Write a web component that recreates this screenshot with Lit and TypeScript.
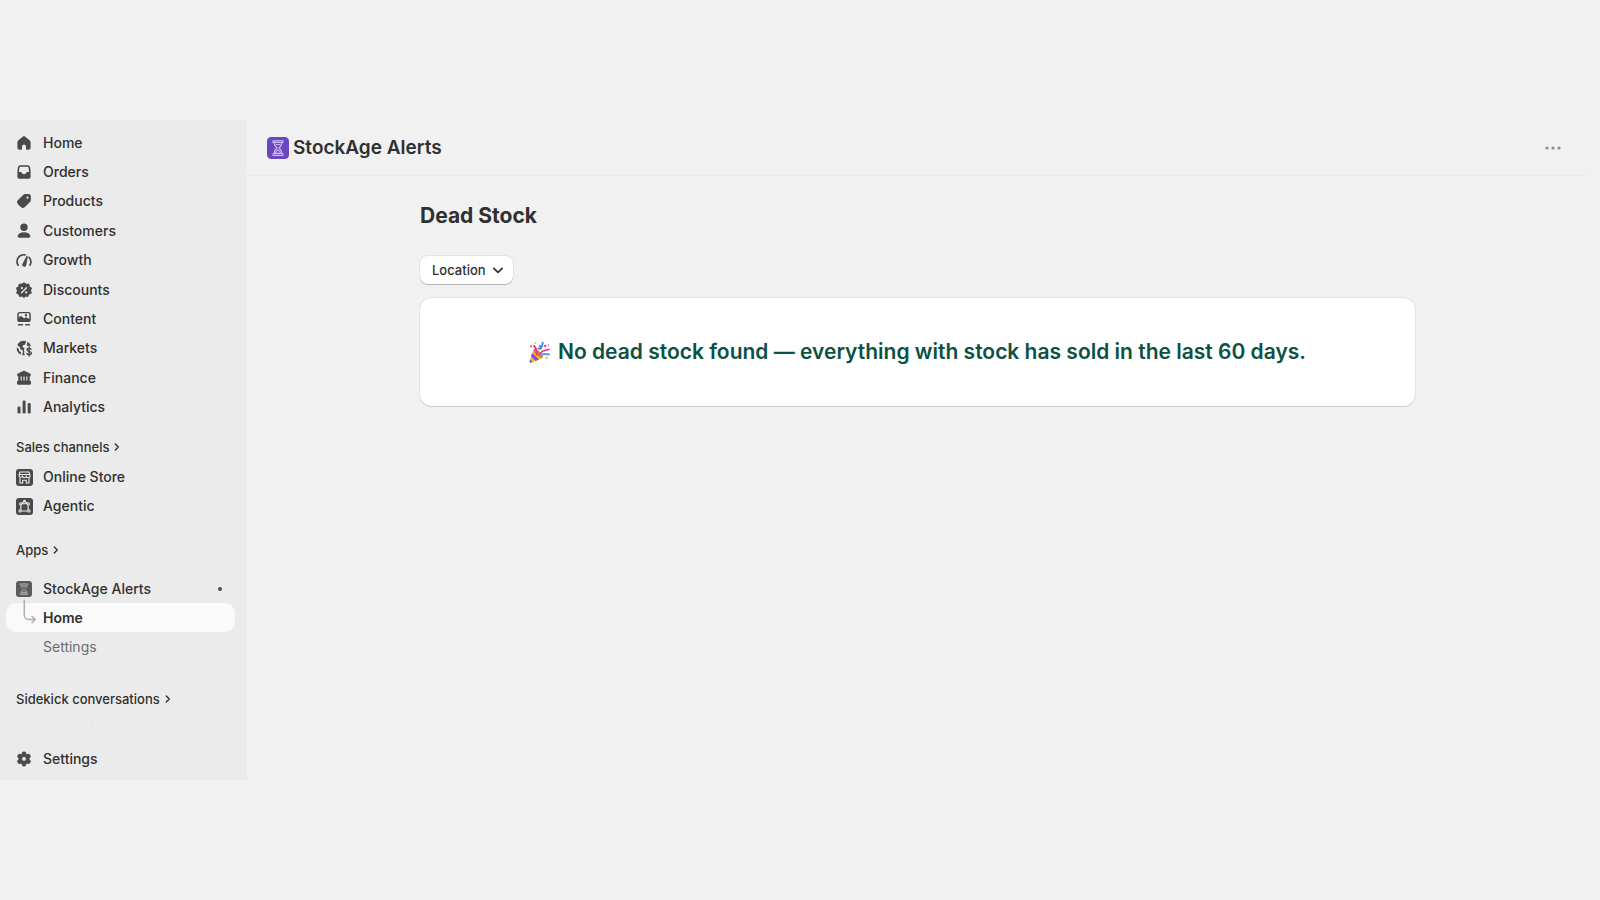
import { LitElement, html, svg, css, type SVGTemplateResult } from "lit";
import { customElement, property } from "lit/decorators.js";

const BG = "#ebebeb";

/* Every glyph is drawn on a 16 x 16 grid. */
const icons: Record<string, SVGTemplateResult> = {
  home: svg`<path d="M7 1.4a1.6 1.6 0 0 1 2 0l4.6 3.8c.6.5 1 1.2 1 2v5.600a2 2 0 0 1-2 2h-1.800a.8.8 0 0 1-.8-.8v-2.500a2 2 0 0 0-4 0v2.500a.8.8 0 0 1-.8.8H3.400a2 2 0 0 1-2-2V7.200c0-.8.4-1.500 1-2z"/>`,
  orders: svg`<path fill-rule="evenodd" d="M4.300 1.200h7.400a2.300 2.300 0 0 1 2.300 1.900l.6 3.900v5.200a2.600 2.600 0 0 1-2.600 2.600H4a2.600 2.600 0 0 1-2.600-2.600V7l.6-3.900a2.300 2.300 0 0 1 2.300-1.900zm.3 1.500c-.6 0-1 .4-1.100.9L2.900 8h1.800c.5 0 .9.300 1.100.7l.3.6c.2.400.6.7 1.100.7h1.600c.5 0 .9-.3 1.100-.7l.3-.6c.2-.4.6-.7 1.100-.7h1.800l-.6-4.400c-.1-.5-.5-.9-1.100-.9z"/>`,
  products: svg`<path fill-rule="evenodd" d="M9.200 1.100h3.300a2.400 2.400 0 0 1 2.400 2.400v3.300c0 .8-.3 1.500-.9 2.100l-5.100 5.100a2.900 2.900 0 0 1-4.100 0L2 11.200a2.900 2.900 0 0 1 0-4.100L7.100 2c.6-.6 1.300-.9 2.100-.9zM11.500 5.700a1.150 1.150 0 1 0 0-2.300 1.150 1.150 0 0 0 0 2.300z"/>`,
  customers: svg`<circle cx="8" cy="4.300" r="3.700"/><path d="M1.700 12.500c.8-2.100 3.300-3.300 6.300-3.300s5.500 1.200 6.300 3.300c.4 1-.3 2.300-1.500 2.300H3.200c-1.200 0-1.900-1.300-1.500-2.300z"/>`,
  growth: svg`<path d="M2.200 13.200A6.700 6.700 0 0 1 9 2.900M13 5.400a6.700 6.700 0 0 1 1 7.800" fill="none" stroke="currentColor" stroke-width="1.700" stroke-linecap="round"/><path d="M11.200 3.800c.5.2.7.6.5 1.100l-1.400 8a2 2 0 1 1-3.600-1.500l3.700-7.100c.2-.4.5-.6.8-.5z"/>`,
  discounts: svg`<path d="M8 .4l2.200 1.700 2.800-.2.500 2.700 2.300 1.500L14.700 8.500l.8 2.700-2.500 1.100-1.100 2.500-2.700-.5L8 15.900l-1.700-1.600-2.700.5-1-2.500L.4 11.200l.9-2.700L.2 6.100l2.300-1.500.6-2.700 2.700.2z" stroke="currentColor" stroke-width=".6" stroke-linejoin="round"/><path d="M10.500 5.700l-5 5" fill="none" stroke="${BG}" stroke-width="1.300" stroke-linecap="round"/><circle cx="5.900" cy="6.100" r="1.100" fill="${BG}"/><circle cx="10.200" cy="10.400" r="1.100" fill="${BG}"/>`,
  content: svg`<path fill-rule="evenodd" d="M3.800.9h8.400A2.600 2.600 0 0 1 14.800 3.500v5a2.600 2.600 0 0 1-2.600 2.600H3.800A2.600 2.600 0 0 1 1.200 8.500v-5A2.600 2.600 0 0 1 3.800.9zM3.900 2.300c-.7 0-1.200.5-1.200 1.200v3l1-.9c.6-.6 1.500-.6 2.100 0l2.300 2 .9-.8c.6-.5 1.500-.5 2.100 0l2.200 1.300V3.500c0-.7-.5-1.200-1.200-1.200zM10 5.500a1.200 1.200 0 1 0 0-2.400 1.200 1.200 0 0 0 0 2.400z"/><path d="M2.500 13.700h4M9.800 13.700h3.600" stroke="currentColor" stroke-width="1.600" stroke-linecap="round"/>`,
  markets: svg`<path d="M8 .8A7.200 7.200 0 0 0 1.400 5L4 7.600l.3 1.700 2.200 1 .5 1.700-.9 3c1 .3 2 .4 3 .2a3 3 0 0 1-.7-3.500 3.200 3.200 0 0 1 .3-3.800L6.500 7.200 7 5.300l2.200-.9.900-3.300A7 7 0 0 0 8 .8zM11.600 1.700l-.9 3.100.6 1.300c.8-.7 2.200-.6 2.900.2l.7-.2a7.200 7.200 0 0 0-3.300-4.400zM.8 7.200a7.200 7.200 0 0 0 3.900 7.200l.5-2.200-2.100-1.300-.3-1.900z"/><path d="M15 9.300c-.3-.7-1-1.100-1.900-1.100-1.200 0-2 .6-2 1.600 0 2.200 4.300 1 4.300 3.200 0 .9-.9 1.600-2.200 1.600-1.100 0-2-.4-2.300-1.200M13.100 7v9" fill="none" stroke="currentColor" stroke-width="1.400" stroke-linecap="round"/>`,
  finance: svg`<path d="M7 .9a2.200 2.200 0 0 1 2 0l5 2.700c1.500.8.900 3-.7 3H2.700C1.100 6.600.5 4.400 2 3.600z"/><path d="M2.300 6h2.300v5H2.300zM5.700 6h1.700v5H5.700zM8.600 6h1.700v5H8.600zM11.400 6h2.300v5h-2.300z"/><rect x="1" y="10.500" width="14" height="4.200" rx="1.500"/>`,
  analytics: svg`<rect x="1.500" y="7.500" width="3" height="7" rx="1.300"/><rect x="6.600" y="1.500" width="3" height="13" rx="1.300"/><rect x="11.700" y="4" width="3" height="10.500" rx="1.300"/>`,
  store: svg`<rect width="17" height="17" rx="3"/><g fill="none" stroke="${BG}" stroke-width="1.100" stroke-linejoin="round"><path d="M4 3h9l1 3.300v.6a1.850 1.850 0 0 1-3.700 0 1.850 1.850 0 0 1-3.700 0 1.850 1.850 0 0 1-3.600 0v-.6zM3.200 5.500h10.600"/><path d="M4 9v5h2.700v-2.700h3.600V14H13V9"/></g>`,
  agentic: svg`<rect width="17" height="17" rx="3"/><g fill="none" stroke="${BG}" stroke-width="1.100"><path d="M4.900 6.500v6M12.100 6.500v6M5.500 5.800h6M5.500 13h6M5.900 5.200L8.500 3.200l2.600 2"/><g fill="#4a4a4a"><circle cx="4.700" cy="5.900" r="1.100"/><circle cx="12.300" cy="5.900" r="1.100"/><circle cx="4.100" cy="12.900" r="1.100"/><circle cx="12.900" cy="12.900" r="1.100"/><circle cx="8.500" cy="3.100" r=".8"/></g></g>`,
  gear: svg`<path fill-rule="evenodd" d="M6.700 1h2.600l.6 2 1.100.6 2.100-.5 1.500 2.400-1.400 1.600v1.500l1.500 1.600-1.500 2.400-2.200-.4-1.100.6-.6 2.200H6.700l-.6-2.200-1.100-.6-2.200.4-1.500-2.400 1.500-1.600V7.100L1.400 5.500l1.500-2.400 2.100.5L6.100 3zM8 10.200a2.300 2.300 0 1 0 0-4.600 2.300 2.300 0 0 0 0 4.600z" stroke="currentColor" stroke-width=".8" stroke-linejoin="round"/>`,
  app: svg`<rect width="16" height="16" rx="3" fill="var(--tile, #5c5c5c)"/><g fill="none" stroke="var(--glass, #b4b4b4)" stroke-width=".8" stroke-linejoin="round"><path d="M4.400 2.800h7.200v1.200H4.400zM4.400 12.200h7.200v1.200H4.400zM5.200 4c0 2.200.8 3 2.100 4-1.300 1-2.100 1.900-2.100 4.100M10.800 4c0 2.200-.8 3-2.100 4 1.300 1 2.100 1.900 2.100 4.100M6.300 5.400h3.400M6.200 11.800c.2-1.300.9-1.900 1.800-2.300.9.400 1.600 1 1.800 2.300z"/></g>`,
  elbow: svg`<path d="M8.300-9.800V5.500a4 4 0 0 0 4 4h6.700M16 6.300l3.300 3.200-3.300 3.200" fill="none" stroke="#b0b0b0" stroke-width="1.500" stroke-linecap="round" stroke-linejoin="round"/>`,
  right: svg`<path d="M6.300 5l3 3-3 3" fill="none" stroke="currentColor" stroke-width="1.400" stroke-linecap="round" stroke-linejoin="round"/>`,
  down: svg`<path d="M3.800 6.300L8 10.300l4.200-4" fill="none" stroke="currentColor" stroke-width="1.700" stroke-linecap="round" stroke-linejoin="round"/>`,
  dots: svg`<circle cx="2" cy="8" r="1.600"/><circle cx="8" cy="8" r="1.600"/><circle cx="14" cy="8" r="1.600"/>`,
  party: svg`<path d="M3.500 5.500L.5 14.600c-.2.800.5 1.400 1.200 1.100l8.700-3.600z" fill="#ffb02e"/><path d="M2.500 8.500l4.900 4.900-2.300 1-3.700-3.700z" fill="#7057c9"/><path d="M.9 13.300l2 1.900-1.300.5c-.7.200-1.300-.3-1.100-1.100z" fill="#7057c9"/><path d="M3.500 5.500c.9-.7 3.200.3 4.900 2.100s2.600 3.600 2 4.500c-.9.400-3.100-.6-4.800-2.300S2.900 6.500 3.500 5.500z" fill="#c98a3a"/><path d="M6.100 9.400C6 6.800 5.500 4.800 3.900 3" fill="none" stroke="#f92f8f" stroke-width="1.500" stroke-linecap="round"/><path d="M8.200 9c1.600-2.300 3.900-2.700 7-3.300" fill="none" stroke="#f92f8f" stroke-width="1.300" stroke-linecap="round"/><path d="M9.200 10c1.700-1.200 3.500-1.200 6-.5" fill="none" stroke="#3fa0f0" stroke-width="1.500" stroke-linecap="round"/><path d="M7.200 4.900c1.900.5 2.700-1.100 1-1.800M8.600 5.200c1.500-1.200 1.200-3 1.900-4.700" fill="none" stroke="#2f8fe8" stroke-width="1.400" stroke-linecap="round"/><g fill="#f92f8f"><circle cx="1.600" cy="3.300" r=".8"/><circle cx="12.400" cy="3" r=".9"/><circle cx="14.800" cy="2.300" r=".5"/></g><g fill="#ffb02e"><circle cx="4.700" cy=".8" r=".7"/><circle cx="13.400" cy="12.200" r=".9"/><circle cx="9.800" cy="6.500" r=".6"/></g>`,
};

@customElement("ui-icon")
class UiIcon extends LitElement {
  @property() name = "home";

  static styles = css`
    :host {
      display: block;
      flex: none;
      width: 16px;
      height: 16px;
    }
    .glyph {
      display: block;
      width: 100%;
      height: 100%;
      overflow: visible;
      fill: currentColor;
    }
  `;

  render() {
    return html`<svg class="glyph" viewBox="0 0 16 16" aria-hidden="true">${icons[this.name]}</svg>`;
  }
}

const mainLinks: [string, string][] = [
  ["home", "Home"],
  ["orders", "Orders"],
  ["products", "Products"],
  ["customers", "Customers"],
  ["growth", "Growth"],
  ["discounts", "Discounts"],
  ["content", "Content"],
  ["markets", "Markets"],
  ["finance", "Finance"],
  ["analytics", "Analytics"],
];

const channelLinks: [string, string][] = [
  ["store", "Online Store"],
  ["agentic", "Agentic"],
];

@customElement("side-nav")
class SideNav extends LitElement {
  static styles = css`
    :host {
      display: block;
      box-sizing: border-box;
      background: #ebebeb;
      padding: 8px 12px 7px 6px;
      color: #303030;
    }
    .list {
      list-style: none;
      margin: 0;
      padding: 0;
      display: grid;
      grid-auto-rows: minmax(29px, 1fr);
    }
    .primary {
      min-height: 294px;
    }
    .link {
      display: flex;
      align-items: center;
      gap: 11px;
      height: 100%;
      padding: 0 10px;
      border-radius: 10px;
      color: inherit;
      text-decoration: none;
      font-size: 14px;
      line-height: 20px;
      font-weight: 500;
    }
    .link ui-icon {
      color: #4a4a4a;
    }
    .heading {
      display: flex;
      align-items: center;
      margin: 0;
      padding: 0 10px;
      font-size: 13px;
      line-height: 20px;
      font-weight: 500;
    }
    .heading-link {
      color: inherit;
      text-decoration: none;
    }
    .channels {
      padding: 15px 0;
    }
    .section-list {
      padding-top: 5px;
    }
    .apps {
      padding-top: 5px;
    }
    .app-list {
      padding-top: 14px;
    }
    .label {
      flex: 1;
    }
    .unread {
      width: 4px;
      height: 4px;
      margin-right: 3px;
      border-radius: 50%;
      background: #4a4a4a;
    }
    .current {
      background: #fafafa;
      font-weight: 600;
    }
    .muted {
      color: #6b6b6b;
      font-weight: 400;
      padding-left: 37px;
    }
    .sidekick {
      padding-top: 28px;
    }
    .loading {
      width: 1px;
      height: 2px;
      margin: 13px 0 20px 86px;
      background: #d4d4d4;
    }
  `;

  private link([icon, label]: [string, string]) {
    return html`<li>
      <a class="link" href="#"><ui-icon name=${icon}></ui-icon><span class="label">${label}</span></a>
    </li>`;
  }

  private heading(label: string) {
    return html`<h2 class="heading">
      <a class="heading-link" href="#">${label}</a><ui-icon name="right"></ui-icon>
    </h2>`;
  }

  render() {
    return html`<nav>
      <ul class="list primary">
        ${mainLinks.map((l) => this.link(l))}
      </ul>
      <section class="channels">
        ${this.heading("Sales channels")}
        <ul class="list section-list">
          ${channelLinks.map((l) => this.link(l))}
        </ul>
      </section>
      <section class="apps">
        ${this.heading("Apps")}
        <ul class="list app-list">
          <li>
            <a class="link" href="#">
              <ui-icon name="app"></ui-icon><span class="label">StockAge Alerts</span>
              <span class="unread"></span>
            </a>
          </li>
          <li>
            <a class="link current" href="#" aria-current="page">
              <ui-icon name="elbow"></ui-icon><span class="label">Home</span>
            </a>
          </li>
          <li><a class="link muted" href="#">Settings</a></li>
        </ul>
      </section>
      <section class="sidekick">
        ${this.heading("Sidekick conversations")}
        <div class="loading"></div>
      </section>
      <ul class="list">
        ${this.link(["gear", "Settings"])}
      </ul>
    </nav>`;
  }
}

@customElement("app-root")
class AppRoot extends LitElement {
  static styles = css`
    :host {
      display: grid;
      grid-template-columns: 247px minmax(0, 1fr);
      align-content: center;
      box-sizing: border-box;
      min-height: 100vh;
      background: #f1f1f1;
      color: #303030;
      font-family: Inter, "Liberation Sans", sans-serif;
    }
    .main {
      padding-right: 12px;
    }
    .topbar {
      display: flex;
      align-items: center;
      gap: 4px;
      padding: 14px 27px 13px 20px;
      border-bottom: 1px solid #ebebeb;
    }
    .logo {
      width: 22px;
      height: 22px;
      --tile: #6b46c1;
      --glass: #cdbcf2;
    }
    .app-name {
      flex: 1;
      margin: 0;
      font-size: 19px;
      line-height: 28px;
      font-weight: 600;
    }
    .more {
      border: 0;
      padding: 2px 0;
      background: none;
      color: #8a8a8a;
    }
    .page {
      max-width: 995px;
      margin: 0 auto;
      padding-top: 26px;
    }
    .title {
      margin: 0 0 26px;
      font-size: 21px;
      line-height: 28px;
      font-weight: 700;
    }
    .filter {
      display: flex;
      align-items: center;
      gap: 4px;
      border: 0;
      padding: 4px 7px 4px 12px;
      border-radius: 8px;
      background: #fff;
      box-shadow: 0 1px 0 #b5b5b5, 0 0 0 1px #e3e3e3;
      color: #303030;
      font-family: inherit;
      font-size: 13px;
      line-height: 20px;
      font-weight: 500;
    }
    .card {
      display: flex;
      align-items: center;
      justify-content: center;
      gap: 8px;
      margin-top: 14px;
      padding: 40px 20px;
      border-radius: 12px;
      background: #fff;
      box-shadow: 0 1px 0 #cfcfcf, 0 0 0 1px #e3e3e3;
    }
    .party {
      width: 21px;
      height: 21px;
    }
    .message {
      margin: 0;
      color: #0c5144;
      font-size: 21px;
      line-height: 28px;
      font-weight: 600;
    }
  `;

  render() {
    return html`
      <side-nav></side-nav>
      <main class="main">
        <header class="topbar">
          <ui-icon class="logo" name="app"></ui-icon>
          <h1 class="app-name">StockAge Alerts</h1>
          <button class="more" type="button" aria-label="More actions"><ui-icon name="dots"></ui-icon></button>
        </header>
        <div class="page">
          <h2 class="title">Dead Stock</h2>
          <button class="filter" type="button" aria-haspopup="true">
            Location <ui-icon name="down"></ui-icon>
          </button>
          <section class="card">
            <ui-icon class="party" name="party"></ui-icon>
            <p class="message">No dead stock found — everything with stock has sold in the last 60 days.</p>
          </section>
        </div>
      </main>
    `;
  }
}
